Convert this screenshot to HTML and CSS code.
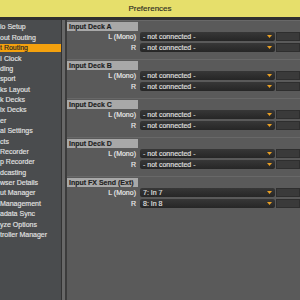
FILE: index.html
```html
<!DOCTYPE html>
<html>
<head>
<meta charset="utf-8">
<title>Preferences</title>
<link rel="stylesheet" href="styles.css">
</head>
<body>
<div class="titlebar">Preferences</div>
<div class="content">
  <nav class="sidebar">
    <div class="item">io Setup</div>
    <div class="item">out Routing</div>
    <div class="item active">t Routing</div>
    <div class="item">I Clock</div>
    <div class="item">ding</div>
    <div class="item">sport</div>
    <div class="item">ks Layout</div>
    <div class="item">k Decks</div>
    <div class="item">ix Decks</div>
    <div class="item">er</div>
    <div class="item">al Settings</div>
    <div class="item">cts</div>
    <div class="item">Recorder</div>
    <div class="item">p Recorder</div>
    <div class="item">dcasting</div>
    <div class="item">wser Details</div>
    <div class="item">ut Manager</div>
    <div class="item">Management</div>
    <div class="item">adata Sync</div>
    <div class="item">yze Options</div>
    <div class="item">troller Manager</div>
  </nav>
  <div class="divider"></div>
  <main class="panel">
    <section class="group">
      <div class="group-head">Input Deck A</div>
      <div class="row"><span class="ch">L (Mono)</span><div class="select"><span>- not connected -</span><svg class="arrow" width="5" height="3" viewBox="0 0 5 3"><polygon points="0,0 5,0 2.5,3"/></svg></div><div class="extra"></div></div>
      <div class="row"><span class="ch">R</span><div class="select"><span>- not connected -</span><svg class="arrow" width="5" height="3" viewBox="0 0 5 3"><polygon points="0,0 5,0 2.5,3"/></svg></div><div class="extra"></div></div>
    </section>
    <section class="group">
      <div class="group-head">Input Deck B</div>
      <div class="row"><span class="ch">L (Mono)</span><div class="select"><span>- not connected -</span><svg class="arrow" width="5" height="3" viewBox="0 0 5 3"><polygon points="0,0 5,0 2.5,3"/></svg></div><div class="extra"></div></div>
      <div class="row"><span class="ch">R</span><div class="select"><span>- not connected -</span><svg class="arrow" width="5" height="3" viewBox="0 0 5 3"><polygon points="0,0 5,0 2.5,3"/></svg></div><div class="extra"></div></div>
    </section>
    <section class="group">
      <div class="group-head">Input Deck C</div>
      <div class="row"><span class="ch">L (Mono)</span><div class="select"><span>- not connected -</span><svg class="arrow" width="5" height="3" viewBox="0 0 5 3"><polygon points="0,0 5,0 2.5,3"/></svg></div><div class="extra"></div></div>
      <div class="row"><span class="ch">R</span><div class="select"><span>- not connected -</span><svg class="arrow" width="5" height="3" viewBox="0 0 5 3"><polygon points="0,0 5,0 2.5,3"/></svg></div><div class="extra"></div></div>
    </section>
    <section class="group">
      <div class="group-head">Input Deck D</div>
      <div class="row"><span class="ch">L (Mono)</span><div class="select"><span>- not connected -</span><svg class="arrow" width="5" height="3" viewBox="0 0 5 3"><polygon points="0,0 5,0 2.5,3"/></svg></div><div class="extra"></div></div>
      <div class="row"><span class="ch">R</span><div class="select"><span>- not connected -</span><svg class="arrow" width="5" height="3" viewBox="0 0 5 3"><polygon points="0,0 5,0 2.5,3"/></svg></div><div class="extra"></div></div>
    </section>
    <section class="group">
      <div class="group-head">Input FX Send (Ext)</div>
      <div class="row"><span class="ch">L (Mono)</span><div class="select"><span>7: In 7</span><svg class="arrow" width="5" height="3" viewBox="0 0 5 3"><polygon points="0,0 5,0 2.5,3"/></svg></div><div class="extra"></div></div>
      <div class="row"><span class="ch">R</span><div class="select"><span>8: In 8</span><svg class="arrow" width="5" height="3" viewBox="0 0 5 3"><polygon points="0,0 5,0 2.5,3"/></svg></div><div class="extra"></div></div>
    </section>
  </main>
</div>
</body>
</html>
```
FILE: styles.css
```css
html, body {
  margin: 0;
  padding: 0;
}
body {
  width: 300px;
  height: 300px;
  overflow: hidden;
  background: #5a5a5a;
  font-family: "Liberation Sans", Arial, sans-serif;
  font-size: 7px;
  -webkit-text-stroke: 0.15px currentColor;
}
.titlebar {
  height: 17px;
  background: #e6df6b;
  color: #2e2e24;
  font-size: 8px;
  line-height: 17px;
  text-align: center;
}
.content {
  display: flex;
  height: 280px;
  border-top: 3px solid #303030;
}
.sidebar {
  width: 61px;
  flex: none;
  background: #4a4c4e;
  overflow: hidden;
  padding-top: 2.3px;
  box-sizing: border-box;
}
.item {
  height: 8px;
  line-height: 8px;
  padding: 1.2px 0;
  white-space: nowrap;
  color: #e2e2e2;
  background-clip: content-box;
}
.item.active {
  background-color: #f4a10e;
  color: #262626;
}
.divider {
  width: 3px;
  flex: none;
  border-left: 1px solid #333333;
  border-right: 2px solid #3c3c3c;
  background: #686868;
}
.panel {
  flex: 1;
  min-width: 0;
  overflow: hidden;
}
.group {
  height: 39px;
  box-sizing: border-box;
  border-top: 1px solid #686868;
  padding-top: 1px;
}
.group-head {
  width: 71px;
  height: 9px;
  box-sizing: border-box;
  padding-left: 2px;
  background: #a8a8a8;
  color: #1e1e1e;
  font-weight: bold;
  line-height: 9px;
  white-space: nowrap;
}
.row {
  display: flex;
  align-items: center;
  height: 11px;
}
.ch {
  width: 73px;
  flex: none;
  box-sizing: border-box;
  padding-right: 4px;
  text-align: right;
  color: #ececec;
  white-space: nowrap;
}
.select {
  width: 135px;
  height: 9px;
  flex: none;
  box-sizing: border-box;
  display: flex;
  align-items: center;
  padding: 0 3px;
  border-radius: 2px;
  background: linear-gradient(#373737, #262626);
  color: #e0e0e0;
  line-height: 9px;
  white-space: nowrap;
}
.arrow {
  margin-left: auto;
  fill: #e9a024;
}
.extra {
  flex: 1;
  height: 9px;
  margin-left: 1px;
  box-sizing: border-box;
  background: #3a3a3a;
  border: 1px solid #2e2e2e;
}
```
